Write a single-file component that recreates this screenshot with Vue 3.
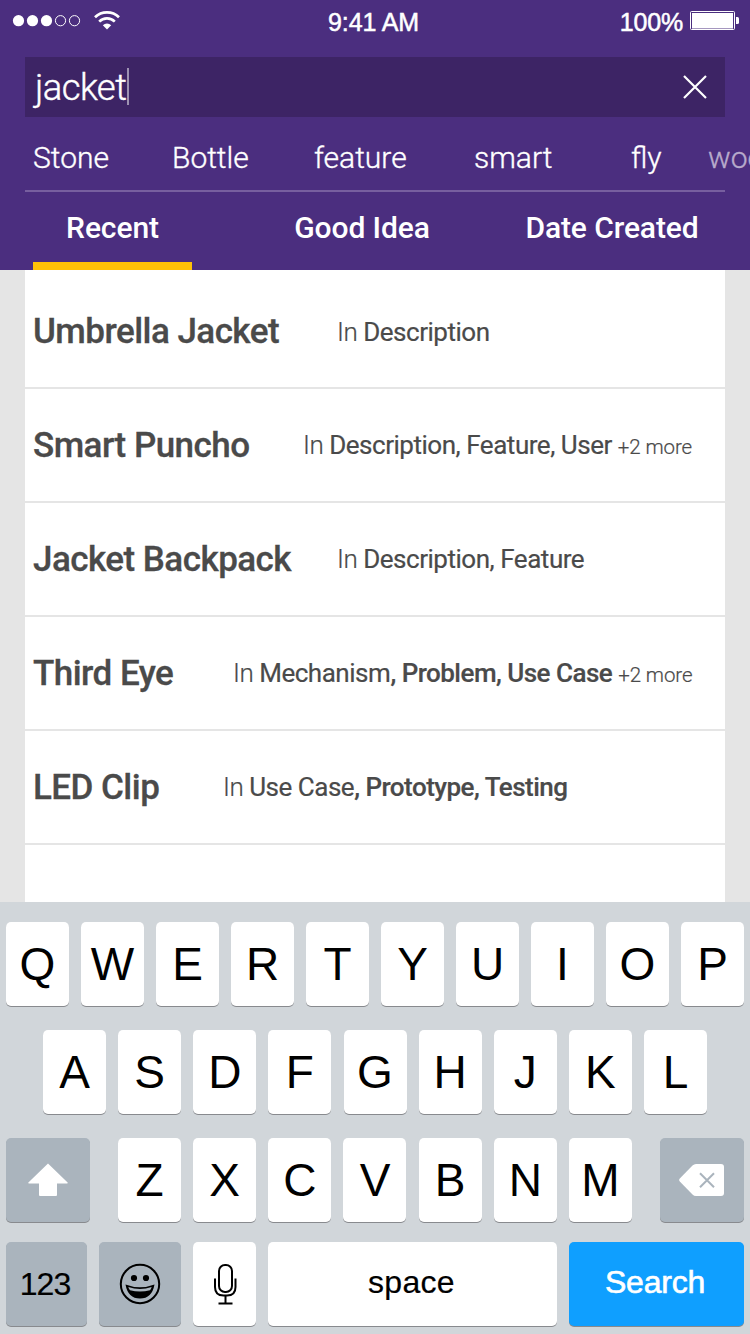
<script setup>
const chips = [
  { text: 'Stone', left: 8 },
  { text: 'Bottle', left: 147 },
  { text: 'feature', left: 289 },
  { text: 'smart', left: 449 },
  { text: 'fly', left: 606 },
  { text: 'wood', left: 683, faded: true },
].map((c, i, all) => ({ ...c, width: (all[i + 1]?.left ?? c.left + 100) - c.left }))

const tabs = [
  { text: 'Recent', width: 159, active: true },
  { text: 'Good Idea', width: 140 },
  { text: 'Date Created', width: 174 },
]

const results = [
  { title: 'Umbrella Jacket', offset: 304, plain: 'Description' },
  { title: 'Smart Puncho', offset: 270, plain: 'Description, Feature, User', more: '+2 more' },
  { title: 'Jacket Backpack', offset: 304, plain: 'Description, Feature' },
  { title: 'Third Eye', offset: 200, plain: 'Mechanism', strong: ', Problem, Use Case', more: '+2 more' },
  { title: 'LED Clip', offset: 190, plain: 'Use Case', strong: ', Prototype, Testing' },
]
</script>

<template>
  <div class="screen">
    <header class="header">
      <div class="status">
        <svg class="signal" width="124" height="40" viewBox="0 0 124 40">
          <g fill="#fff">
            <circle cx="18.5" cy="20.7" r="5.6" />
            <circle cx="32.5" cy="20.7" r="5.6" />
            <circle cx="46.5" cy="20.7" r="5.6" />
          </g>
          <g fill="none" stroke="#fff">
            <circle cx="60.5" cy="20.7" r="5.1" />
            <circle cx="74.5" cy="20.7" r="5.1" />
          </g>
          <g fill="none" stroke="#fff" stroke-width="2.7">
            <path d="M95 17.2a17.2 17.2 0 0 1 24 0" />
            <path d="M99.2 21.6a11.2 11.2 0 0 1 15.6 0" />
          </g>
          <path d="M102.8 25.2a6.2 6.2 0 0 1 8.4 0L107 29.4z" fill="#fff" />
        </svg>
        <span class="time">9:41 AM</span>
        <span class="battery">
          <span class="percent">100%</span>
          <svg width="50" height="40" viewBox="0 0 50 40">
            <rect x=".5" y="11.5" width="44" height="18" rx="1" fill="none" stroke="#fff" />
            <rect x="2" y="13" width="41" height="15.5" fill="#fff" />
            <path d="M46 17h1.5q1.5 0 1.5 1.5v4q0 1.500-1.500 1.500H46z" fill="#fff" />
          </svg>
        </span>
      </div>

      <div class="search">
        <span class="query">jacket</span><span class="caret"></span>
        <svg class="clear" width="24" height="24" viewBox="0 0 24 24">
          <path d="M1 1l22 22M23 1L1 23" stroke="#fff" stroke-width="2.2" />
        </svg>
      </div>

      <div class="chips">
        <span
          v-for="c in chips"
          :key="c.text"
          class="chip"
          :class="{ faded: c.faded }"
          :style="{ width: c.width + 'px' }"
        >{{ c.text }}</span>
      </div>

      <nav class="tabs">
        <span
          v-for="t in tabs"
          :key="t.text"
          class="tab"
          :class="{ active: t.active }"
          :style="{ width: t.width + 'px' }"
        >{{ t.text }}</span>
      </nav>
    </header>

    <main class="results">
      <div v-for="r in results" :key="r.title" class="row">
        <span class="title" :style="{ width: r.offset + 'px' }">{{ r.title }}</span>
        <span class="meta"><span class="in">In </span>{{ r.plain }}<b v-if="r.strong">{{ r.strong }}</b><span v-if="r.more" class="more">{{ r.more }}</span></span>
      </div>
    </main>

    <section class="keyboard">
      <div class="keys">
        <span v-for="k in 'QWERTYUIOP'" :key="k" class="key">{{ k }}</span>
      </div>
      <div class="keys middle">
        <span v-for="k in 'ASDFGHJKL'" :key="k" class="key">{{ k }}</span>
      </div>
      <div class="keys lower">
        <span class="key dark wide">
          <svg width="40" height="34" viewBox="0 0 40 34">
            <path d="M20 .5L39.600 19.500q.6.900-.6.900H29v11.600q0 1-1 1H12q-1 0-1-1V20.400H1q-1.200 0-.6-.9z" fill="#fff" />
          </svg>
        </span>
        <span class="letters">
          <span v-for="k in 'ZXCVBNM'" :key="k" class="key">{{ k }}</span>
        </span>
        <span class="key dark wide">
          <svg width="46" height="32" viewBox="0 0 46 32">
            <path d="M17 0h25q3 0 3 3v26q0 3-3 3H17q-2 0-3.500-1.500L.8 17.500q-1.300-1.500 0-3L13.500 1.500Q15 0 17 0z" fill="#fff" />
            <path d="M21 9.200l14 14M35 9.200l-14 14" stroke="#aab4bd" stroke-width="2" />
          </svg>
        </span>
      </div>
      <div class="keys bottom">
        <span class="key dark numbers">123</span>
        <span class="key dark emoji">
          <svg width="42" height="42" viewBox="0 0 42 42">
            <circle cx="21" cy="21" r="19.200" fill="none" stroke="#000" stroke-width="2" />
            <circle cx="15" cy="15" r="3.100" />
            <circle cx="27" cy="15" r="3.100" />
            <path d="M6.500 21.500q14.500 5.600 29 0Q33 35.500 21 35.500T6.500 21.500z" />
            <path d="M9.300 24q11.700 3.800 23.400 0-.8 2.200-1.700 3.200-10 2.600-20 0-1.200-1.500-1.700-3.200z" fill="#aab4bd" />
          </svg>
        </span>
        <span class="key mic">
          <svg width="24" height="42" viewBox="0 0 24 42" fill="none" stroke="#000" stroke-width="2">
            <rect x="6" y="2" width="13" height="27" rx="6" />
            <path d="M2 15.500v8.500q0 8.500 8.500 8.500h3.500q8.500 0 8.500-8.500v-8.500M12.500 32.500v8M5.500 40.500h14" />
          </svg>
        </span>
        <span class="key space">space</span>
        <span class="key go">Search</span>
      </div>
    </section>
  </div>
</template>

<style>
body {
  margin: 0;
  overflow: hidden;
}
</style>

<style scoped>
.screen {
  display: flex;
  flex-direction: column;
  width: 750px;
  height: 1334px;
  overflow: hidden;
  background: #e5e5e5;
  font-family: Roboto, "Liberation Sans", sans-serif;
  white-space: nowrap;
}
.header {
  box-sizing: border-box;
  height: 270px;
  flex: none;
  background: #4b2e7f;
  color: #fff;
}
.status {
  display: grid;
  grid-template-columns: 1fr auto 1fr;
  align-items: start;
  height: 57px;
  align-content: start;
  font: 25px/40px "Liberation Sans", Arial, sans-serif;
  -webkit-text-stroke: 0.5px #fff;
}
.status svg {
  display: block;
}
.time {
  padding-top: 2px;
  margin-left: -3px;
  letter-spacing: -0.1px;
}
.battery {
  display: flex;
  justify-content: flex-end;
  padding-right: 10px;
}
.percent {
  padding-top: 2px;
  margin-right: 7px;
  letter-spacing: -0.2px;
}
.search {
  display: flex;
  align-items: center;
  box-sizing: border-box;
  height: 60px;
  margin: 0 25px;
  padding: 0 18px 0 10px;
  background: #3d2465;
  font-size: 36.5px;
  font-weight: 300;
}
.query {
  letter-spacing: -0.6px;
  -webkit-text-stroke: 0.4px #fff;
}
.caret {
  width: 2px;
  height: 37px;
  margin: 0 0 2px 1px;
  background: #9e92b2;
}
.clear {
  margin-left: auto;
}
.chips {
  display: flex;
  box-sizing: border-box;
  height: 75px;
  margin: 0 25px;
  padding-left: 8px;
  border-bottom: 2px solid #775f9f;
  font-size: 30px;
  font-weight: 300;
  line-height: 82px;
  -webkit-text-stroke: 0.35px currentColor;
}
.chip {
  flex: none;
}
.faded {
  color: #b8abcc;
}
.tabs {
  display: flex;
  height: 78px;
  padding-left: 33px;
  font-size: 30px;
  font-weight: 500;
  line-height: 72px;
  text-align: center;
}
.tab {
  box-sizing: border-box;
  flex: none;
  margin-right: 100px;
  letter-spacing: -0.1px;
}
.tab + .tab {
  margin-right: 93px;
}
.active {
  border-bottom: 8px solid #ffc107;
}
.results {
  height: 627px;
  flex: none;
  margin: 0 25px;
  padding-top: 5px;
  background: #fff;
  color: #4a4a4a;
}
.row {
  display: flex;
  box-sizing: border-box;
  height: 114px;
  padding-left: 8px;
  border-bottom: 2px solid #e5e5e5;
}
.title {
  flex: none;
  font-size: 35px;
  font-weight: 500;
  line-height: 114px;
  letter-spacing: -0.54px;
  -webkit-text-stroke: 0.3px currentColor;
}
.meta {
  font-size: 26px;
  line-height: 113px;
  letter-spacing: -0.47px;
  -webkit-text-stroke: 0.2px currentColor;
}
.row:first-child .meta {
  line-height: 115px;
}
.in {
  font-weight: 300;
}
.meta b {
  font-weight: 500;
  letter-spacing: -0.52px;
}
.more {
  margin-left: 6px;
  font-size: 20.5px;
  font-weight: 300;
  letter-spacing: -0.1px;
}
.keyboard {
  box-sizing: border-box;
  flex: 1;
  padding: 20px 6px 0;
  background: #d1d6da;
  color: #000;
  font: 46px/84px "Liberation Sans", Arial, sans-serif;
}
.keys {
  display: flex;
  justify-content: space-between;
  margin-bottom: 24px;
}
.middle {
  padding: 0 37px;
}
.lower {
  margin-bottom: 20px;
}
.letters {
  display: flex;
  justify-content: space-between;
  width: 514px;
}
.key {
  display: flex;
  align-items: center;
  justify-content: center;
  width: 63px;
  height: 84px;
  border-radius: 5px;
  background: #fff;
  box-shadow: 0 1px 0 #888a8e;
}
.dark {
  background: #aab4bd;
}
.wide {
  width: 84px;
}
.bottom {
  justify-content: flex-start;
  gap: 12px;
  font-size: 32px;
  -webkit-text-stroke: 0.2px currentColor;
}
.numbers {
  box-sizing: border-box;
  width: 81px;
  padding-right: 3px;
  letter-spacing: -1px;
}
.emoji {
  width: 82px;
}
.space,
.go {
  box-sizing: border-box;
  padding-bottom: 4px;
}
.space {
  width: 289px;
  padding-right: 2px;
  letter-spacing: 0.3px;
}
.go {
  width: 175px;
  padding-right: 3px;
  background: #0f9fff;
  color: #fff;
  letter-spacing: -0.2px;
  -webkit-text-stroke-width: 0.6px;
}
</style>
